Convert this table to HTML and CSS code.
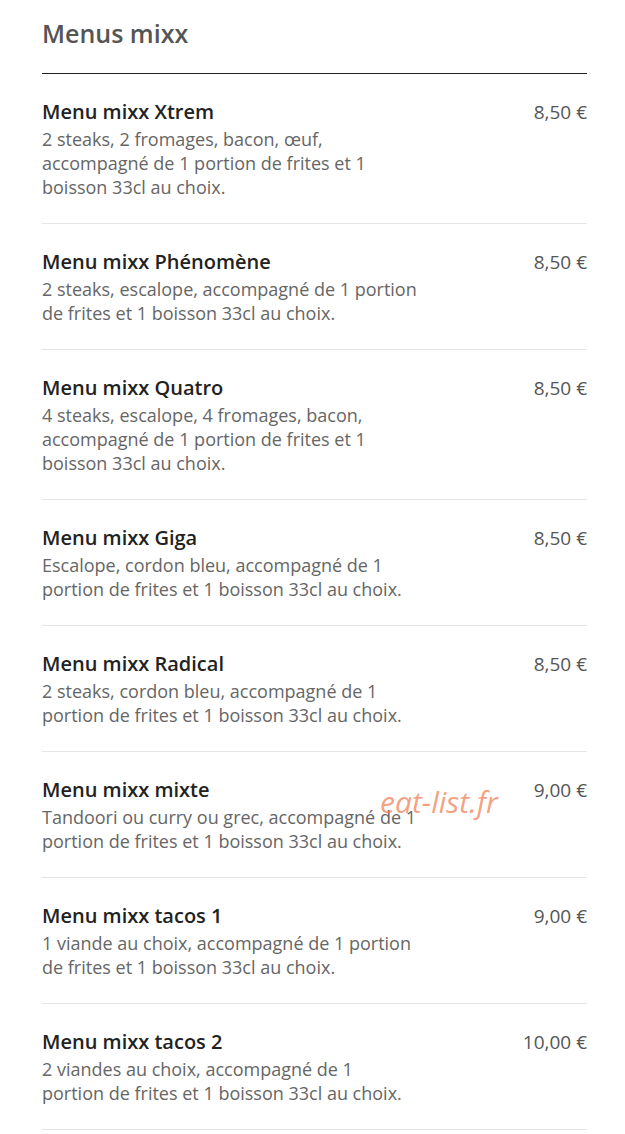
FILE: index.html
```html
<!DOCTYPE html>
<html lang="fr">
<head>
    <meta charset="UTF-8">
    <meta name="viewport" content="width=device-width, initial-scale=1.0">
    <title>Menus mixx</title>
    <link rel="stylesheet" href="styles.css">
</head>
<body>
    <div class="menu-section">
        <h2 class="section-title">Menus mixx</h2>

        <div class="menu-list">
            <div class="menu-item">
                <div class="item-info">
                    <div class="item-name">Menu mixx Xtrem</div>
                    <div class="item-desc">2 steaks, 2 fromages, bacon, œuf, accompagné de 1 portion de frites et 1 boisson 33cl au choix.</div>
                </div>
                <div class="item-price">8,50 €</div>
            </div>

            <div class="menu-item">
                <div class="item-info">
                    <div class="item-name">Menu mixx Phénomène</div>
                    <div class="item-desc">2 steaks, escalope, accompagné de 1 portion de frites et 1 boisson 33cl au choix.</div>
                </div>
                <div class="item-price">8,50 €</div>
            </div>

            <div class="menu-item">
                <div class="item-info">
                    <div class="item-name">Menu mixx Quatro</div>
                    <div class="item-desc">4 steaks, escalope, 4 fromages, bacon, accompagné de 1 portion de frites et 1 boisson 33cl au choix.</div>
                </div>
                <div class="item-price">8,50 €</div>
            </div>

            <div class="menu-item">
                <div class="item-info">
                    <div class="item-name">Menu mixx Giga</div>
                    <div class="item-desc">Escalope, cordon bleu, accompagné de 1 portion de frites et 1 boisson 33cl au choix.</div>
                </div>
                <div class="item-price">8,50 €</div>
            </div>

            <div class="menu-item">
                <div class="item-info">
                    <div class="item-name">Menu mixx Radical</div>
                    <div class="item-desc">2 steaks, cordon bleu, accompagné de 1 portion de frites et 1 boisson 33cl au choix.</div>
                </div>
                <div class="item-price">8,50 €</div>
            </div>

            <div class="menu-item">
                <div class="item-info">
                    <div class="item-name">Menu mixx mixte</div>
                    <div class="item-desc">Tandoori ou curry ou grec, accompagné de 1 portion de frites et 1 boisson 33cl au choix.</div>
                </div>
                <div class="item-price">9,00 €</div>
                <span class="watermark">eat-list.fr</span>
            </div>

            <div class="menu-item">
                <div class="item-info">
                    <div class="item-name">Menu mixx tacos 1</div>
                    <div class="item-desc">1 viande au choix, accompagné de 1 portion de frites et 1 boisson 33cl au choix.</div>
                </div>
                <div class="item-price">9,00 €</div>
            </div>

            <div class="menu-item">
                <div class="item-info">
                    <div class="item-name">Menu mixx tacos 2</div>
                    <div class="item-desc">2 viandes au choix, accompagné de 1<br>portion de frites et 1 boisson 33cl au choix.</div>
                </div>
                <div class="item-price">10,00 €</div>
            </div>
        </div>
    </div>
</body>
</html>
```

FILE: styles.css
```css
body {
    margin: 0;
    background: #fff;
    font-family: "Open Sans", Arial, sans-serif;
}

.menu-section {
    padding: 0 38px 0 42px;
}

.section-title {
    margin: 0;
    padding: 15px 0 22px;
    font-size: 25px;
    line-height: 36px;
    font-weight: 600;
    color: #555;
    border-bottom: 1px solid #222;
}

.menu-item {
    position: relative;
    display: flex;
    justify-content: space-between;
    align-items: flex-start;
    padding: 23px 0 24px;
    border-bottom: 1px solid #e5e5e5;
}

.item-info {
    max-width: 388px;
}

.item-name {
    font-size: 20px;
    line-height: 30px;
    font-weight: 600;
    color: #222;
}

.item-desc {
    font-size: 18px;
    line-height: 24px;
    color: #666;
}

.item-price {
    font-size: 19px;
    line-height: 30px;
    font-weight: 500;
    color: #555;
    white-space: nowrap;
}

.watermark {
    position: absolute;
    left: 338px;
    top: 29px;
    font-size: 30px;
    font-style: italic;
    color: rgba(240, 130, 90, 0.75);
    pointer-events: none;
}
```
